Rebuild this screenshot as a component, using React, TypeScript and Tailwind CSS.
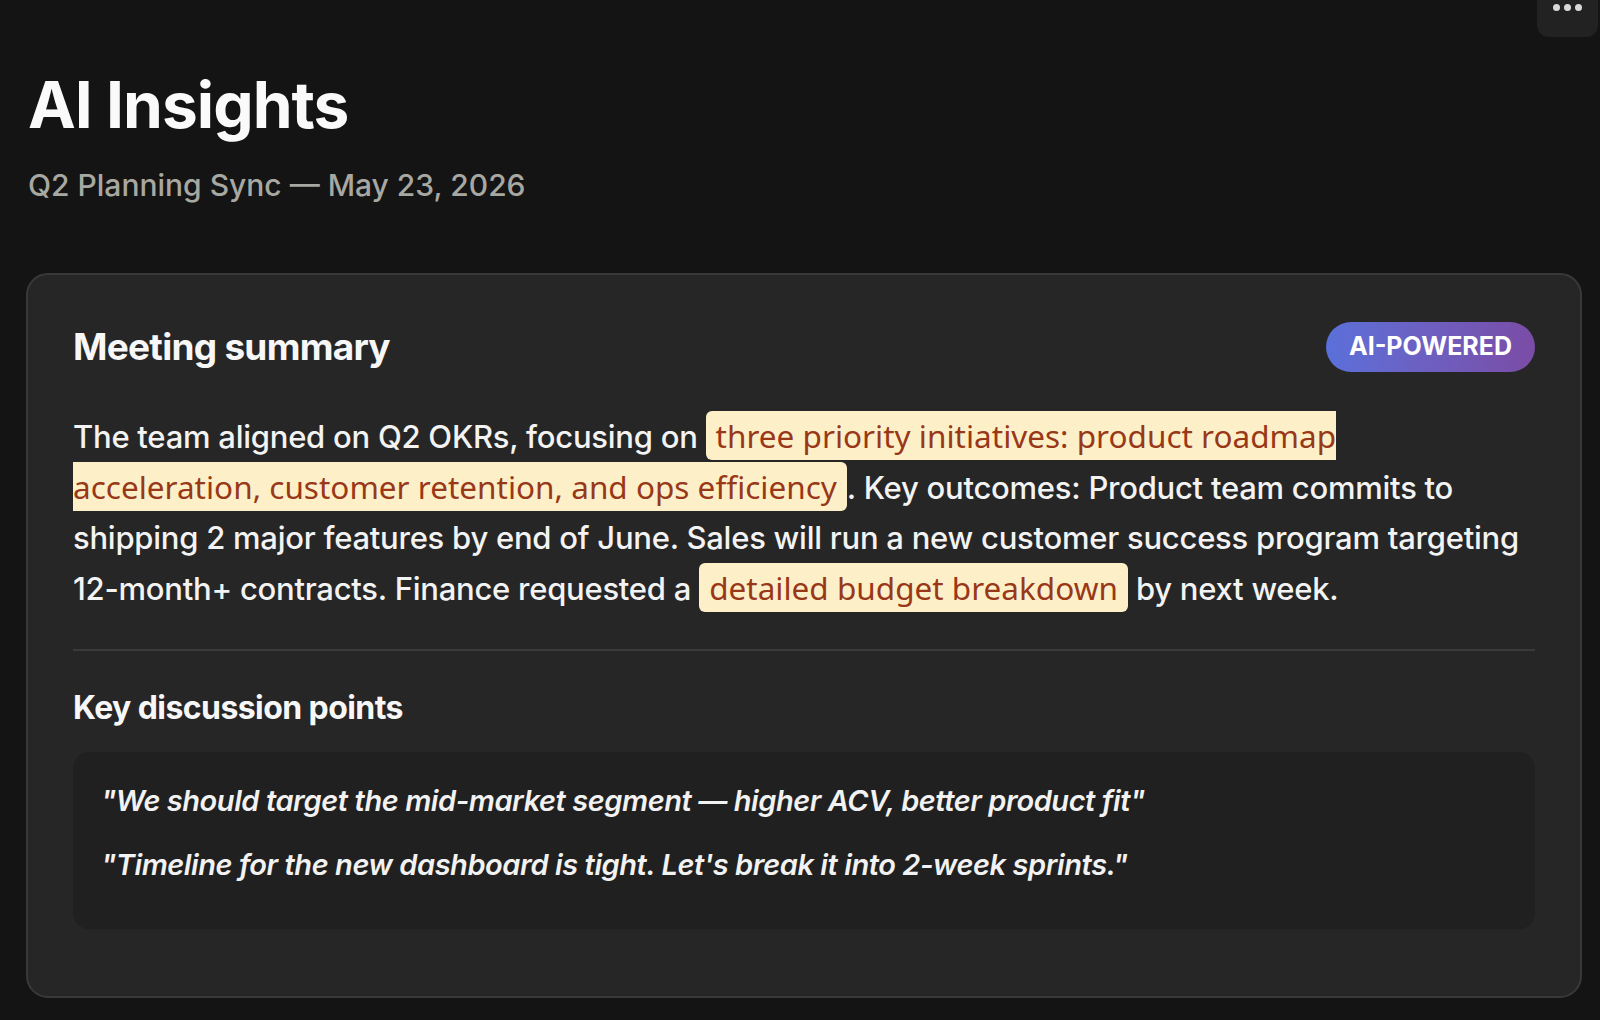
import React from 'react'

const sans = "font-['Inter','Liberation_Sans',sans-serif]"
const mark = "font-['Noto_Sans','Open_Sans',sans-serif] font-normal text-[31.5px] tracking-normal text-[#983818] bg-[#fdf0c9] rounded-md py-[3px] px-[10px]"

const QUOTES = [
  '"We should target the mid-market segment — higher ACV, better product fit"',
  '"Timeline for the new dashboard is tight. Let\'s break it into 2-week sprints."',
]

export default function App() {
  return (
    <div className={`relative min-h-screen bg-[#141414] text-white ${sans} pl-[26px] pr-[18px] pt-[69px] pb-6 overflow-hidden`}>
      {/* more menu, clipped by top edge */}
      <button className="absolute -top-[24px] right-[2px] w-[61px] h-[61px] rounded-[12px] bg-[#222222] flex items-end justify-center gap-[4px] pb-[26px]">
        <span className="w-[7px] h-[7px] rounded-full bg-[#d8d8d8]" />
        <span className="w-[7px] h-[7px] rounded-full bg-[#d8d8d8]" />
        <span className="w-[7px] h-[7px] rounded-full bg-[#d8d8d8]" />
      </button>

      <h1 className="pl-[2px] text-[64px] leading-[72px] font-bold tracking-[-0.015em] text-[#fafafa]">AI Insights</h1>
      <p className="pl-[2px] mt-[26px] text-[30px] leading-[36px] font-medium text-[#a8a8a2]">
        Q2 Planning Sync — May 23, 2026
      </p>

      <section className="mt-[70px] border-2 border-[#393939] rounded-[22px] bg-[#262626] px-[45px] pt-[47px] pb-[67px]">
        <div className="flex items-center justify-between h-[50px]">
          <h2 className="text-[37px] leading-[44px] font-bold tracking-[-0.02em] text-[#f7f7f7]">Meeting summary</h2>
          <span className="h-[50px] w-[209px] rounded-full bg-linear-to-r from-[#5a70da] to-[#7a4ca6] flex items-center justify-center text-[25px] font-bold text-white">
            AI-POWERED
          </span>
        </div>

        <p className="mt-[39px] text-[31px] leading-[50px] font-medium tracking-[-0.008em] text-[#f3f3f3]">
          The team aligned on Q2 OKRs, focusing on{' '}
          <span className={mark}>three priority initiatives: product roadmap<br />acceleration, customer retention, and ops efficiency</span>
          . Key outcomes: Product team commits to<br />
          shipping 2 major features by end of June. Sales will run a new customer success program targeting<br />
          12-month+ contracts. Finance requested a{' '}
          <span className={mark}>detailed budget breakdown</span> by next week.
        </p>

        <div className="mt-[35px] h-[2px] bg-[#3a3a3a]" />

        <h3 className="mt-[37px] text-[32px] leading-[40px] font-bold tracking-[-0.018em] text-[#f7f7f7]">Key discussion points</h3>

        <div className="mt-[24px] rounded-[16px] bg-[#202020] pl-[28px] pr-6 pt-[29px] pb-[44px] space-y-6">
          {QUOTES.map(q => (
            <p key={q} className="text-[29px] leading-[40px] italic font-semibold tracking-[-0.015em] text-[#f2f2f2]">{q}</p>
          ))}
        </div>
      </section>
    </div>
  )
}
